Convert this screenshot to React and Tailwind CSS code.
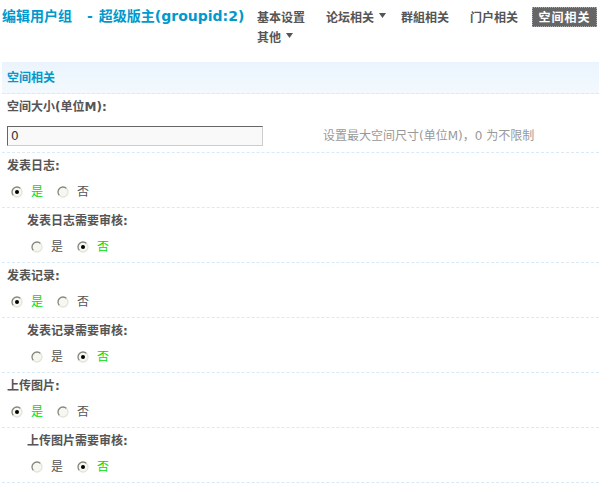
import React from "react";

const Radio = ({ checked }) => (
  <svg width="12" height="12" viewBox="0 0 12 12" className="shrink-0 block">
    <circle cx="6" cy="6" r="5" fill="#f7f7f2" />
    <path d="M2.46 9.54 A5 5 0 0 1 9.54 2.46" stroke="#85857c" strokeWidth="1.3" fill="none" />
    <path d="M9.54 2.46 A5 5 0 0 1 2.46 9.54" stroke="#e4e4dc" strokeWidth="1.3" fill="none" />
    {checked && <circle cx="6" cy="6" r="2" fill="#000" />}
  </svg>
);

const Arrow = () => (
  <svg width="7" height="5" viewBox="0 0 7 5" className="block">
    <path d="M0 0 H7 L3.5 5 Z" fill="#555" />
  </svg>
);

const Block = ({ label, indent, yes }) => (
  <div className="border-b border-dashed border-[#d6eafa]">
    <div className={indent ? "h-[26px] flex items-center pl-[25px] font-bold text-[#555]" : "h-[26px] flex items-center pl-[5px] font-bold text-[#555]"}>
      {label}
    </div>
    <div className={indent ? "h-[28px] pb-[2px] flex items-center pl-[29px]" : "h-[28px] pb-[2px] flex items-center pl-[9px]"}>
      <Radio checked={yes} />
      <span className={yes ? "ml-[8px] text-[#00dd00]" : "ml-[8px] text-[#555]"}>是</span>
      <span className="ml-[14px]">
        <Radio checked={!yes} />
      </span>
      <span className={!yes ? "ml-[8px] text-[#00dd00]" : "ml-[8px] text-[#555]"}>否</span>
    </div>
  </div>
);

export default function App() {
  return (
    <div
      className="w-[599px] h-[484px] bg-white overflow-hidden text-[12px] leading-[14px]"
      style={{ fontFamily: '"DejaVu Sans", "Noto Sans CJK SC", sans-serif' }}
    >
      <div className="h-[62px] flex items-start">
        <div className="w-[255px] ml-[2px] mt-[6px] h-[20px] flex items-center shrink-0 text-[14px] font-bold text-[#0099cc] whitespace-nowrap">
          <span>编辑用户组</span>
          <span className="ml-[15px] mr-[6px]">-</span>
          <span>超级版主(groupid:2)</span>
        </div>
        <div
          className="w-[342px] pt-[7px] flex flex-wrap font-bold text-[#555]"
          style={{ fontFamily: '"Noto Sans CJK SC", sans-serif' }}
        >
          <div className="h-[20px] flex items-center">基本设置</div>
          <div className="h-[20px] flex items-center ml-[21px]">
            论坛相关<span className="ml-[5px] -mt-[3px]"><Arrow /></span>
          </div>
          <div className="h-[20px] flex items-center ml-[15px]">群組相关</div>
          <div className="h-[20px] flex items-center ml-[21px]">门户相关</div>
          <div className="h-[20px] w-[65px] flex items-center justify-center ml-[14px] bg-[#666] border border-dotted border-[#aaa] text-white tracking-[1px]">
            空间相关
          </div>
          <div className="h-[20px] flex items-center">
            其他<span className="ml-[5px] -mt-[3px]"><Arrow /></span>
          </div>
        </div>
      </div>
      <div className="ml-[2px]">
        <div className="h-[32px] flex items-center pl-[5px] bg-linear-to-b from-[#ebf4fd] to-[#f3f9fe] border-b border-dashed border-[#d6eafa] font-bold text-[#0099cc]">
          空间相关
        </div>
        <div className="border-b border-dashed border-[#d6eafa]">
          <div className="h-[26px] flex items-center pl-[5px] font-bold text-[#555]">空间大小(单位M):</div>
          <div className="h-[32px] flex items-center pl-[5px]">
            <div className="w-[256px] h-[20px] flex items-center pl-[3px] bg-[#f9f9f9] border border-t-[#666] border-l-[#666] border-r-[#ccc] border-b-[#ccc] text-[#333]">
              0
            </div>
            <span className="ml-[60px] text-[#999]">设置最大空间尺寸(单位M)，0 为不限制</span>
          </div>
        </div>
        <Block label="发表日志:" yes />
        <Block label="发表日志需要审核:" indent yes={false} />
        <Block label="发表记录:" yes />
        <Block label="发表记录需要审核:" indent yes={false} />
        <Block label="上传图片:" yes />
        <Block label="上传图片需要审核:" indent yes={false} />
      </div>
    </div>
  );
}
